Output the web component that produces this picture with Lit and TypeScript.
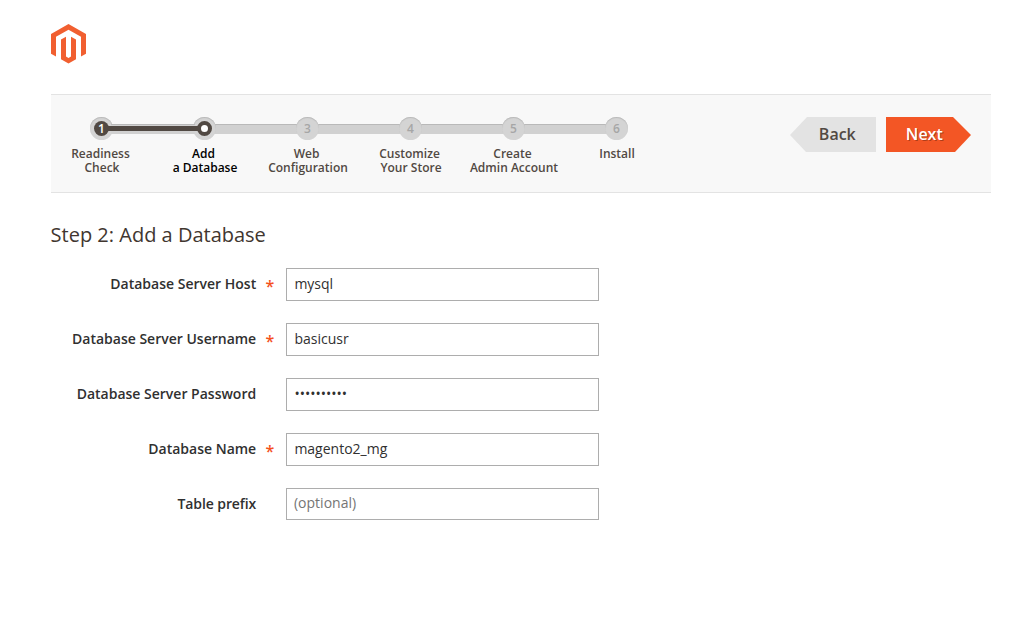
import { LitElement, html, css, svg, nothing } from "lit";
import { customElement } from "lit/decorators.js";
import { classMap } from "lit/directives/class-map.js";

interface Step {
  lines: string[];
}

interface Field {
  label: string;
  value?: string;
  type?: string;
  placeholder?: string;
  required?: boolean;
}

const STEPS: Step[] = [
  { lines: ["Readiness", "Check"] },
  { lines: ["Add", "a Database"] },
  { lines: ["Web", "Configuration"] },
  { lines: ["Customize", "Your Store"] },
  { lines: ["Create", "Admin Account"] },
  { lines: ["Install"] },
];

const FIELDS: Field[] = [
  { label: "Database Server Host", value: "mysql", required: true },
  { label: "Database Server Username", value: "basicusr", required: true },
  { label: "Database Server Password", value: "password12", type: "password" },
  { label: "Database Name", value: "magento2_mg", required: true },
  { label: "Table prefix", placeholder: "(optional)" },
];

@customElement("setup-steps")
class SetupSteps extends LitElement {
  static styles = css`
    :host {
      display: block;
    }
    .steps {
      display: flex;
      margin: 0;
      padding: 0;
      list-style: none;
    }
    .step {
      width: 103px;
      display: flex;
      flex-direction: column;
      align-items: center;
      color: #514943;
      font-size: 12px;
      font-weight: 600;
      line-height: 14px;
    }
    .marker {
      align-self: stretch;
      height: 23px;
      display: grid;
      grid-template-columns: 1fr 23px 1fr;
      align-items: center;
    }
    .track {
      box-sizing: border-box;
      height: 10px;
      background: #d1d1d1;
      border-top: 1px solid #b9b9b9;
      margin: 1px -2px 0;
      display: flex;
      align-items: flex-start;
    }
    .track.filled::before {
      content: "";
      flex: 1;
      height: 5px;
      margin: 1px -5px 0;
      background: #514943;
    }
    .track.none {
      visibility: hidden;
    }
    .circle {
      box-sizing: border-box;
      width: 23px;
      height: 23px;
      border-radius: 50%;
      background: #d4d4d4;
      box-shadow: inset 0 1px 1px #b9b9b9;
      color: #a6a6a6;
      display: flex;
      align-items: center;
      justify-content: center;
      z-index: 1;
    }
    .dot {
      box-sizing: border-box;
      width: 15px;
      height: 15px;
      border-radius: 50%;
      display: flex;
      align-items: center;
      justify-content: center;
    }
    .done .dot {
      background: #514943;
      color: #fff;
    }
    .active .dot {
      background: #fff;
      border: 4px solid #514943;
    }
    .track.filled {
      z-index: 2;
    }
    .track.filled.left {
      margin-left: 0;
    }
    .label {
      margin-top: 7px;
      text-align: center;
      white-space: nowrap;
    }
    .line {
      display: block;
      padding-right: 2px;
    }
    .line + .line,
    .line:only-child {
      padding: 0 0 0 1px;
    }
    .active {
      color: #000;
    }
  `;

  render() {
    const current = 1;
    return html`<ul class="steps">
      ${STEPS.map(
        (step, i) => html`<li
          class=${classMap({ step: true, done: i < current, active: i === current })}
        >
          <div class="marker">
            <span
              class=${classMap({ track: true, left: true, none: i === 0, filled: i === current })}
            ></span>
            <span class="circle"
              ><span class="dot">${i === current ? nothing : i + 1}</span></span
            >
            <span
              class=${classMap({ track: true, none: i === STEPS.length - 1, filled: i < current })}
            ></span>
          </div>
          <div class="label">
            ${step.lines.map((l) => html`<span class="line">${l}</span>`)}
          </div>
        </li>`
      )}
    </ul>`;
  }
}

@customElement("app-root")
class AppRoot extends LitElement {
  static styles = css`
    :host {
      display: block;
      box-sizing: border-box;
      min-height: 633px;
      padding: 24px 30px 0 51px;
      background: #fff;
      color: #41362f;
      font-family: "Open Sans", "Noto Sans", sans-serif;
      font-size: 14px;
    }
    .logo {
      display: block;
      width: 35px;
      height: 39.5px;
    }
    .bar {
      box-sizing: border-box;
      height: 99px;
      margin-top: 30.5px;
      padding: 22px 20px 0 0;
      border-top: 1px solid #e3e3e3;
      border-bottom: 1px solid #e3e3e3;
      background: #f8f8f8;
      display: flex;
      justify-content: space-between;
      align-items: flex-start;
    }
    .progress {
      margin-left: -1px;
    }
    .actions {
      display: flex;
      gap: 10px;
    }
    .btn {
      box-sizing: border-box;
      height: 35px;
      border: 0;
      font: 600 16px/35px "Open Sans", sans-serif;
    }
    .back {
      width: 86px;
      padding: 0 0 0 8.6px;
      background: #e3e3e3;
      color: #514943;
      clip-path: polygon(17px 0, 100% 0, 100% 100%, 16px 100%, 0 18px);
    }
    .next {
      width: 85px;
      padding: 0 8.4px 0 0;
      background: #f35625;
      color: #fff;
      text-shadow: 1px 1px 0 rgba(0, 0, 0, 0.3);
      clip-path: polygon(0 0, 67px 0, 100% 18px, 69px 100%, 0 100%);
    }
    .title {
      margin: 28px 0 0 -0.4px;
      font-size: 20px;
      line-height: 28px;
      font-weight: 400;
    }
    .form {
      margin-top: 19px;
      display: flex;
      flex-direction: column;
      gap: 22px;
    }
    .field {
      display: grid;
      grid-template-columns: 205.2px 29.8px 313px;
      height: 33px;
    }
    .name {
      text-align: right;
      font-weight: 600;
      line-height: 32px;
      color: #303030;
    }
    .field:last-child .name {
      letter-spacing: -0.1px;
    }
    .star {
      padding-left: 9.2px;
      color: #f4511e;
      font-size: 16px;
      font-weight: 600;
      line-height: 36px;
    }
    .input {
      box-sizing: border-box;
      width: 313px;
      height: 33px;
      margin: 0;
      padding: 0 8px 2px 7.4px;
      border: 1px solid #adadad;
      border-radius: 0;
      background: #fff;
      color: #303030;
      font: 400 14px "Open Sans", sans-serif;
    }
    .input:placeholder-shown {
      height: 32px;
      padding: 0 8px 3px 7px;
    }
    .input::placeholder {
      color: #757575;
      opacity: 1;
    }
  `;

  private logo() {
    return svg`<svg class="logo" viewBox="1.609 0 20.782 24" preserveAspectRatio="none">
      <path fill="#f15f30" d="M12 24l-4.455-2.572v-12l2.97-1.715v12.001l1.485.902 1.485-.902V7.713l2.971 1.715v12L12 24zM22.391 6v12l-2.969 1.714V7.713L12 3.43 4.574 7.713v12.001L1.609 18V6L12 0l10.391 6z"/>
    </svg>`;
  }

  render() {
    return html`
      ${this.logo()}
      <div class="bar">
        <setup-steps class="progress"></setup-steps>
        <div class="actions">
          <button class="btn back">Back</button>
          <button class="btn next">Next</button>
        </div>
      </div>
      <h2 class="title">Step 2: Add a Database</h2>
      <div class="form">
        ${FIELDS.map(
          (f) => html`<label class="field">
            <span class="name">${f.label}</span>
            <span class="star">${f.required ? "*" : nothing}</span>
            <input
              class="input"
              type=${f.type ?? "text"}
              placeholder=${f.placeholder ?? nothing}
              .value=${f.value ?? ""}
            />
          </label>`
        )}
      </div>
    `;
  }
}
